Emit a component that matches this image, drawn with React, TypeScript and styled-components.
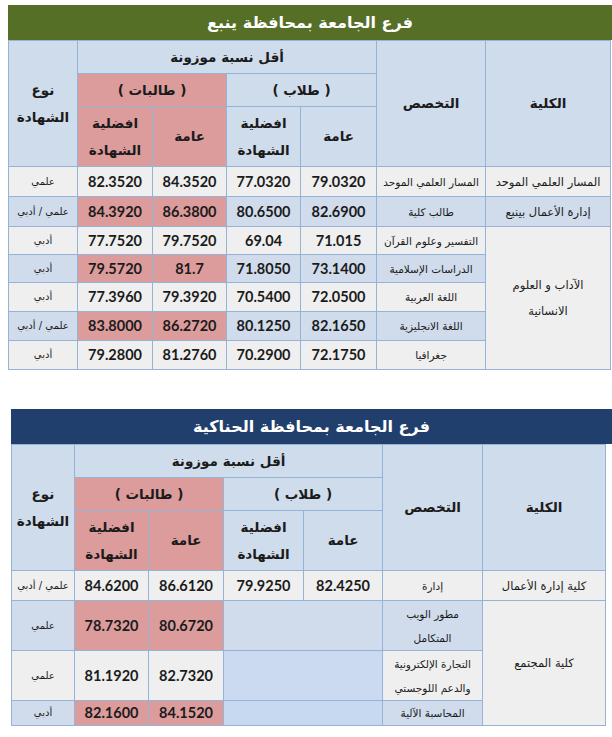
import React from "react";
import styled, { createGlobalStyle } from "styled-components";

const GlobalStyle = createGlobalStyle`
  html, body { margin: 0; padding: 0; background: #ffffff; }
  body { font-family: "DejaVu Sans", sans-serif; }
`;

const C = {
  line: "#95b3d7",
  head: "#cfdcec",
  blue: "#d0dcec",
  grey: "#efefef",
  pink: "#dc9c9b",
  empty2: "#cbdaf0",
  empty3: "#c6d9f1",
  text: "#1b1b1b",
};

type Tone = "head" | "blue" | "grey" | "pink" | "empty2" | "empty3";

const Page = styled.div`
  display: flex;
  flex-direction: column;
  gap: 39px;
  padding-top: 5px;
`;

const Block = styled.section<{ $left: number }>`
  display: flex;
  flex-direction: column;
  margin-left: ${(p) => p.$left}px;
`;

const TitleBar = styled.div<{ $bg: string; $width: number }>`
  width: ${(p) => p.$width}px;
  height: 35px;
  background: ${(p) => p.$bg};
  color: #ffffff;
  display: flex;
  align-items: center;
  justify-content: center;
  font-family: "DejaVu Sans", sans-serif;
  font-weight: bold;
  font-size: 16px;
  direction: rtl;
`;

const Grid = styled.table<{ $width: number }>`
  width: ${(p) => p.$width}px;
  table-layout: fixed;
  border-collapse: collapse;
  direction: rtl;
`;

const Row = styled.tr<{ $h: number }>`
  height: ${(p) => p.$h}px;
`;

const HeadCell = styled.th<{ $tone?: Tone }>`
  background: ${(p) => C[p.$tone ?? "head"]};
  border: 1px solid ${C.line};
  padding: 0 2px;
  color: ${C.text};
  font-family: "DejaVu Sans", sans-serif;
  font-weight: bold;
  font-size: 13.5px;
  line-height: 27px;
  text-align: center;
  vertical-align: middle;
`;

const DataCell = styled.td<{ $tone: Tone; $kind: "num" | "spec" | "college" | "type" }>`
  background: ${(p) => C[p.$tone]};
  border: 1px solid ${C.line};
  padding: 0 2px;
  color: ${C.text};
  text-align: center;
  vertical-align: middle;
  white-space: nowrap;
  font-family: ${(p) =>
    p.$kind === "num" ? '"Lato", "Open Sans", sans-serif' : '"DejaVu Sans", sans-serif'};
  font-weight: ${(p) => (p.$kind === "num" ? 700 : 400)};
  font-size: ${(p) =>
    p.$kind === "num" ? "14.5px" : p.$kind === "college" ? "11.5px" : p.$kind === "spec" ? "10.5px" : "10px"};
  line-height: ${(p) => (p.$kind === "college" ? "26px" : "24px")};
`;

type Line = {
  college?: { text: React.ReactNode; span: number; tone: Tone };
  spec: React.ReactNode;
  nums: (string | null)[]; // [general boys, pref boys, general girls, pref girls]
  type: string;
  tone: "blue" | "grey";
  emptyTone?: Tone;
  h: number;
};

const widths1 = [125, 109, 76, 74, 74, 75, 69];
const widths2 = [123, 100, 79, 80, 75, 74, 63];

const rows1: Line[] = [
  { college: { text: "المسار العلمي الموحد", span: 1, tone: "grey" }, spec: "المسار العلمي الموحد", nums: ["79.0320", "77.0320", "84.3520", "82.3520"], type: "علمي", tone: "grey", h: 30 },
  { college: { text: "إدارة الأعمال بينبع", span: 1, tone: "blue" }, spec: "طالب كلية", nums: ["82.6900", "80.6500", "86.3800", "84.3920"], type: "علمي / أدبي", tone: "blue", h: 30 },
  { college: { text: <>الآداب و العلوم<br />الانسانية</>, span: 5, tone: "grey" }, spec: "التفسير وعلوم القرآن", nums: ["71.015", "69.04", "79.7520", "77.7520"], type: "أدبي", tone: "grey", h: 28 },
  { spec: "الدراسات الإسلامية", nums: ["73.1400", "71.8050", "81.7", "79.5720"], type: "أدبي", tone: "blue", h: 28 },
  { spec: "اللغة العربية", nums: ["72.0500", "70.5400", "79.3920", "77.3960"], type: "أدبي", tone: "grey", h: 29 },
  { spec: "اللغة الانجليزية", nums: ["82.1650", "80.1250", "86.2720", "83.8000"], type: "علمي / أدبي", tone: "blue", h: 29 },
  { spec: "جغرافيا", nums: ["72.1750", "70.2900", "81.2760", "79.2800"], type: "أدبي", tone: "grey", h: 29 },
];

const rows2: Line[] = [
  { college: { text: "كلية إدارة الأعمال", span: 1, tone: "grey" }, spec: "إدارة", nums: ["82.4250", "79.9250", "86.6120", "84.6200"], type: "علمي / أدبي", tone: "grey", h: 30 },
  { college: { text: "كلية المجتمع", span: 3, tone: "grey" }, spec: <>مطور الويب<br />المتكامل</>, nums: [null, null, "80.6720", "78.7320"], type: "علمي", tone: "blue", emptyTone: "blue", h: 50 },
  { spec: <>التجارة الإلكترونية<br />والدعم اللوجستي</>, nums: [null, null, "82.7320", "81.1920"], type: "علمي", tone: "grey", emptyTone: "empty2", h: 50 },
  { spec: "المحاسبة الآلية", nums: [null, null, "84.1520", "82.1600"], type: "أدبي", tone: "blue", emptyTone: "empty3", h: 25 },
];

function BranchTable({ title, titleBg, left, titleWidth, widths, rows }: {
  title: string; titleBg: string; left: number; titleWidth: number; widths: number[]; rows: Line[];
}) {
  const total = widths.reduce((a, b) => a + b, 0);
  return (
    <Block $left={left}>
      <TitleBar $bg={titleBg} $width={titleWidth}>{title}</TitleBar>
      <Grid $width={total}>
        <colgroup>
          {widths.map((w, i) => <col key={i} style={{ width: w }} />)}
        </colgroup>
        <thead>
          <Row $h={33}>
            <HeadCell rowSpan={3}>الكلية</HeadCell>
            <HeadCell rowSpan={3}>التخصص</HeadCell>
            <HeadCell colSpan={4}>أقل نسبة موزونة</HeadCell>
            <HeadCell rowSpan={3}>نوع<br />الشهادة</HeadCell>
          </Row>
          <Row $h={33}>
            <HeadCell colSpan={2}>( طلاب )</HeadCell>
            <HeadCell colSpan={2} $tone="pink">( طالبات )</HeadCell>
          </Row>
          <Row $h={60}>
            <HeadCell>عامة</HeadCell>
            <HeadCell>افضلية<br />الشهادة</HeadCell>
            <HeadCell $tone="pink">عامة</HeadCell>
            <HeadCell $tone="pink">افضلية<br />الشهادة</HeadCell>
          </Row>
        </thead>
        <tbody>
          {rows.map((r, i) => {
            const girls: Tone = r.tone === "blue" ? "pink" : "grey";
            return (
              <Row key={i} $h={r.h}>
                {r.college && (
                  <DataCell rowSpan={r.college.span} $tone={r.college.tone} $kind="college">{r.college.text}</DataCell>
                )}
                <DataCell $tone={r.tone} $kind="spec">{r.spec}</DataCell>
                {r.nums[0] === null ? (
                  <DataCell colSpan={2} $tone={r.emptyTone ?? r.tone} $kind="num" />
                ) : (
                  <>
                    <DataCell $tone={r.tone} $kind="num">{r.nums[0]}</DataCell>
                    <DataCell $tone={r.tone} $kind="num">{r.nums[1]}</DataCell>
                  </>
                )}
                <DataCell $tone={girls} $kind="num">{r.nums[2]}</DataCell>
                <DataCell $tone={girls} $kind="num">{r.nums[3]}</DataCell>
                <DataCell $tone={r.tone} $kind="type">{r.type}</DataCell>
              </Row>
            );
          })}
        </tbody>
      </Grid>
    </Block>
  );
}

export default function App() {
  return (
    <>
      <GlobalStyle />
      <Page>
        <BranchTable title="فرع الجامعة بمحافظة ينبع" titleBg="#566f27" left={8} titleWidth={604} widths={widths1} rows={rows1} />
        <BranchTable title="فرع الجامعة بمحافظة الحناكية" titleBg="#213f6c" left={11} titleWidth={601} widths={widths2} rows={rows2} />
      </Page>
    </>
  );
}
